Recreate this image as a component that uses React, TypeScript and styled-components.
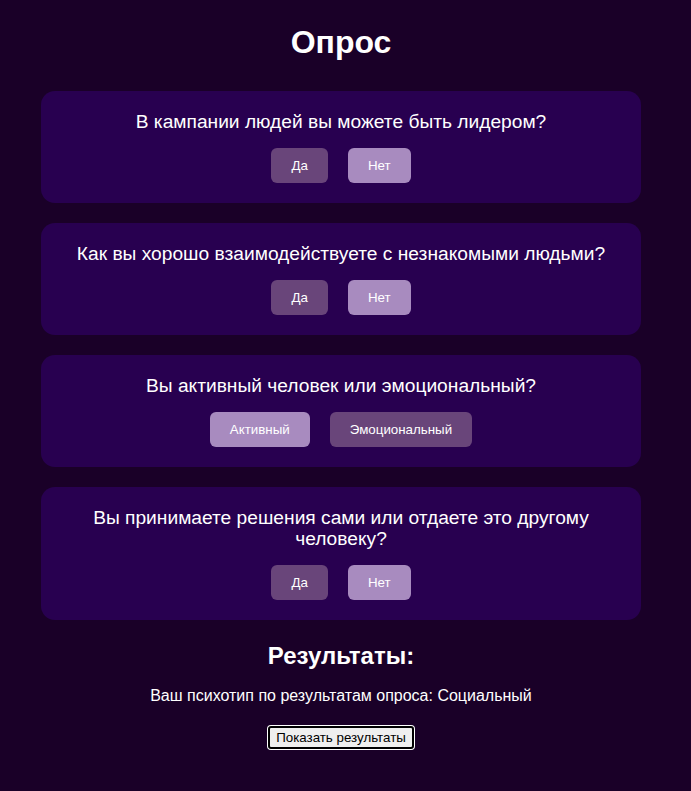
import React, { useState } from "react";
import styled, { createGlobalStyle } from "styled-components";

const GlobalStyle = createGlobalStyle`
  html, body {
    margin: 0;
    background: #1a0028;
  }
  body {
    font-family: "Liberation Sans", Arial, sans-serif;
    color: #fff;
  }
`;

const Page = styled.div`
  padding: 24px 9px 40px 0;
`;

const Container = styled.div`
  width: 600px;
  margin: 0 auto;
  display: flex;
  flex-direction: column;
  align-items: center;
  text-align: center;
`;

const Title = styled.h1`
  font-size: 32px;
  font-weight: bold;
  line-height: 37px;
  margin: 0 0 30px;
`;

const Questions = styled.div`
  width: 100%;
  display: flex;
  flex-direction: column;
  gap: 20px;
`;

const Card = styled.div`
  background: #280050;
  border-radius: 14px;
  padding: 20px;
`;

const Question = styled.p`
  font-size: 19.2px;
  line-height: 21px;
  margin: 0 0 16px;
`;

const ButtonGroup = styled.div`
  display: flex;
  justify-content: center;
  gap: 20px;
`;

const Answer = styled.button<{ $light?: boolean }>`
  font-family: "Liberation Sans", Arial, sans-serif;
  font-size: 13.33px;
  line-height: 15px;
  padding: 10px 20px;
  border: none;
  border-radius: 6px;
  color: #fff;
  background: ${(p) => (p.$light ? "#a88bbf" : "#69457a")};
  cursor: pointer;
`;

const ResultsTitle = styled.h2`
  font-size: 24px;
  font-weight: bold;
  line-height: 28px;
  margin: 22px 0 17px;
`;

const ResultText = styled.p`
  font-size: 16px;
  line-height: 18px;
  margin: 0 0 21px;
`;

const ShowButton = styled.button`
  font-family: "Liberation Sans", Arial, sans-serif;
  font-size: 13.33px;
  line-height: 15px;
  color: #000;
  background: #efefef;
  border: 2px solid #000;
  border-radius: 3px;
  box-shadow: 0 0 0 1px #fff;
  padding: 2px 6px;
  cursor: pointer;
`;

type Item = {
  text: string;
  options: { label: string; light: boolean }[];
};

const items: Item[] = [
  {
    text: "В кампании людей вы можете быть лидером?",
    options: [
      { label: "Да", light: false },
      { label: "Нет", light: true },
    ],
  },
  {
    text: "Как вы хорошо взаимодействуете с незнакомыми людьми?",
    options: [
      { label: "Да", light: false },
      { label: "Нет", light: true },
    ],
  },
  {
    text: "Вы активный человек или эмоциональный?",
    options: [
      { label: "Активный", light: true },
      { label: "Эмоциональный", light: false },
    ],
  },
  {
    text: "Вы принимаете решения сами или отдаете это другому человеку?",
    options: [
      { label: "Да", light: false },
      { label: "Нет", light: true },
    ],
  },
];

const App = () => {
  const [shown, setShown] = useState(true);

  return (
    <Page>
      <GlobalStyle />
      <Container>
        <Title>Опрос</Title>
        <Questions>
          {items.map((item, i) => (
            <Card key={i}>
              <Question>{item.text}</Question>
              <ButtonGroup>
                {item.options.map((o) => (
                  <Answer key={o.label} $light={o.light}>
                    {o.label}
                  </Answer>
                ))}
              </ButtonGroup>
            </Card>
          ))}
        </Questions>
        <ResultsTitle>Результаты:</ResultsTitle>
        {shown && (
          <ResultText>Ваш психотип по результатам опроса: Социальный</ResultText>
        )}
        <ShowButton onClick={() => setShown(true)}>Показать результаты</ShowButton>
      </Container>
    </Page>
  );
};

export default App;
